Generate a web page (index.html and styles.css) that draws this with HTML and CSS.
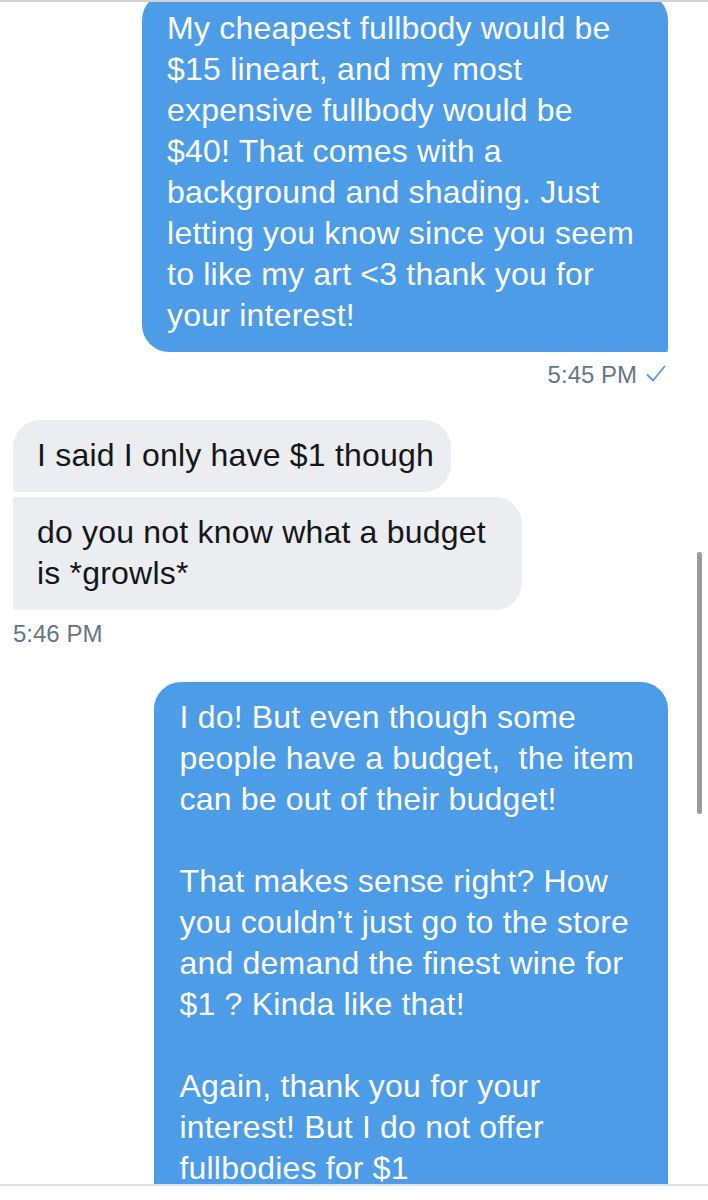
FILE: index.html
```html
<!DOCTYPE html>
<html lang="en">
<head>
<meta charset="utf-8">
<title>Direct messages</title>
<link rel="stylesheet" href="styles.css">
</head>
<body>
<div class="screen">
  <div class="thread">
    <div class="group group--out group--first">
      <div class="bubble bubble--out bubble--tail">My cheapest fullbody would be<br>$15 lineart, and my most<br>expensive fullbody would be<br>$40! That comes with a<br>background and shading. Just<br>letting you know since you seem<br>to like my art &lt;3 thank you for<br>your interest!</div>
      <div class="meta meta--out">5:45 PM
        <svg class="check" viewBox="0 0 20 18" width="20" height="18" aria-hidden="true"><polyline points="1.5,10 7,15.5 18.5,1.5" fill="none" stroke="#4c9ce8" stroke-width="1.8" stroke-linecap="round" stroke-linejoin="round"/></svg>
      </div>
    </div>

    <div class="group group--in">
      <div class="bubble bubble--in bubble--top">I said I only have $1 though</div>
      <div class="bubble bubble--in bubble--bottom">do you not know what a budget<br>is *growls*</div>
      <div class="meta">5:46 PM</div>
    </div>

    <div class="group group--out group--last">
      <div class="bubble bubble--out bubble--open">I do! But even though some<br>people have a budget,&nbsp; the item<br>can be out of their budget!<br><br>That makes sense right? How<br>you couldn’t just go to the store<br>and demand the finest wine for<br>$1 ? Kinda like that!<br><br>Again, thank you for your<br>interest! But I do not offer<br>fullbodies for $1</div>
    </div>
  </div>
  <div class="composer"></div>
  <div class="scrollbar"></div>
</div>
</body>
</html>
```

FILE: styles.css
```css
* { box-sizing: border-box; }

html, body {
  margin: 0;
  padding: 0;
  background: #ffffff;
}

body {
  font-family: "Liberation Sans", Arial, sans-serif;
  -webkit-font-smoothing: antialiased;
}

.screen {
  position: relative;
  width: 708px;
  height: 1200px;
  overflow: hidden;
  background: #ffffff;
}

.thread {
  height: 1184px;
  border-top: 2px solid #d3d3d6;
  overflow: hidden;
  display: flex;
  flex-direction: column;
}

.group {
  display: flex;
  flex-direction: column;
}

.group--out {
  align-items: flex-end;
  padding-right: 40px;
}

.group--in {
  align-items: flex-start;
  padding-left: 13px;
  margin-top: 31px;
  gap: 5px;
}

.group--first {
  margin-top: -9px;
}

.group--last {
  margin-top: 34px;
}

.bubble {
  font-size: 32px;
  line-height: 41px;
  letter-spacing: 0.2px;
  padding: 15px 32px 16px 25px;
  border-radius: 27px;
  white-space: nowrap;
}

.bubble--out {
  background: #4c9ce8;
  color: #ffffff;
}

.bubble--tail {
  border-bottom-right-radius: 2px;
  padding-right: 34px;
}

.bubble--open {
  padding-right: 34px;
  padding-bottom: 40px;
}

.bubble--in {
  background: #ebedf0;
  color: #14171a;
  padding-left: 24px;
}

.bubble--top {
  border-bottom-left-radius: 3px;
  padding-right: 17px;
}

.bubble--bottom {
  border-top-left-radius: 3px;
  border-bottom-left-radius: 3px;
  padding-right: 36px;
}

.meta {
  font-size: 24px;
  line-height: 28px;
  color: #657786;
  margin-top: 5px;
  display: flex;
  align-items: center;
  gap: 9px;
}

.meta--out {
  margin-top: 9px;
  margin-right: 2px;
}

.check {
  display: block;
  margin-top: -2px;
}

.composer {
  height: 16px;
  border-top: 2px solid #e3e3e6;
  background: #ffffff;
}

.scrollbar {
  position: absolute;
  left: 697px;
  top: 552px;
  width: 5px;
  height: 262px;
  border-radius: 3px;
  background: #9b9b9b;
}
```
